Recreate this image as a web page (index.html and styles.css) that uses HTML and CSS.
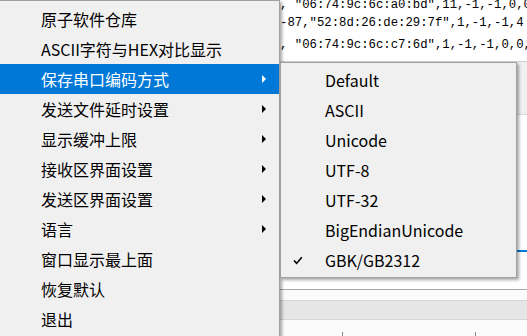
FILE: index.html
```html
<!DOCTYPE html>
<html lang="zh-CN">
<head>
    <meta charset="UTF-8">
    <title>串口菜单</title>
    <link rel="stylesheet" href="styles.css">
</head>
<body>
    <div class="app">
        <!-- 接收区文本 -->
        <div class="editor">
            <div class="code-line l1">, "06:74:9c:6c:a0:bd",11,-1,-1,0,0</div>
            <div class="code-line l2">-87,"52:8d:26:de:29:7f",1,-1,-1,4</div>
            <div class="code-line l3">, "06:74:9c:6c:c7:6d",1,-1,-1,0,0,</div>
        </div>
        <div class="panel">
            <div class="panel-head"></div>
            <div class="panel-body">
                <div class="tab-line"></div>
            </div>
            <div class="status">
                <div class="status-band"></div>
                <div class="status-cells">
                    <span class="cell c1"></span>
                    <span class="cell c2"></span>
                </div>
            </div>
        </div>
    </div>

    <!-- 主菜单 -->
    <ul class="menu main-menu">
        <li class="menu-item">原子软件仓库</li>
        <li class="menu-item">ASCII字符与HEX对比显示</li>
        <li class="menu-item active has-sub">保存串口编码方式</li>
        <li class="menu-item has-sub">发送文件延时设置</li>
        <li class="menu-item has-sub">显示缓冲上限</li>
        <li class="menu-item has-sub">接收区界面设置</li>
        <li class="menu-item has-sub">发送区界面设置</li>
        <li class="menu-item has-sub">语言</li>
        <li class="menu-item">窗口显示最上面</li>
        <li class="menu-item">恢复默认</li>
        <li class="menu-item">退出</li>
    </ul>

    <!-- 子菜单：编码方式 -->
    <ul class="menu sub-menu">
        <li class="menu-item">Default</li>
        <li class="menu-item">ASCII</li>
        <li class="menu-item">Unicode</li>
        <li class="menu-item">UTF-8</li>
        <li class="menu-item">UTF-32</li>
        <li class="menu-item">BigEndianUnicode</li>
        <li class="menu-item checked">
            <svg class="check" width="10" height="9" viewBox="0 0 10 9">
                <polyline points="1,4.5 3.6,7.4 8.8,1.2" fill="none" stroke="#000" stroke-width="1.6"/>
            </svg>
            GBK/GB2312
        </li>
    </ul>
</body>
</html>
```

FILE: styles.css
```css
body {
    margin: 0;
    width: 527px;
    height: 336px;
    overflow: hidden;
    background-color: #ffffff;
    font-family: "Noto Sans CJK SC", sans-serif;
}

.app {
    display: flex;
    flex-direction: column;
    height: 336px;
}

.editor {
    height: 61px;
    padding-left: 280px;
    background-color: #ffffff;
    border-bottom: 1px solid #d0d0d0;
    font-family: "Liberation Mono", monospace;
    font-size: 12.3px;
    color: #000;
    white-space: nowrap;
    overflow: hidden;
}

.code-line {
    height: 18px;
    line-height: 18px;
}

.l1 {
    margin-top: -4px;
}

.l3 {
    margin-top: 4px;
}

.panel {
    flex: 1;
    display: flex;
    flex-direction: column;
    background-color: #f0f0f0;
}

.panel-head {
    height: 52px;
    border-bottom: 1px solid #d9d9d9;
}

.panel-body {
    height: 174px;
    background-color: #ffffff;
    border-bottom: 1px solid #a8a8a8;
}

.tab-line {
    margin-top: 135px;
    height: 2px;
    background-color: #0078d7;
}

.status {
    flex: 1;
    display: flex;
    flex-direction: column;
    background-color: #fbfbfb;
}

.status-band {
    margin-top: 10px;
    height: 18px;
    background-color: #e6e6e6;
    border-top: 1px solid #d6d6d6;
    border-bottom: 1px solid #d6d6d6;
}

.status-cells {
    flex: 1;
    display: flex;
    align-items: flex-end;
}

.cell {
    display: block;
    width: 1px;
    height: 4px;
    background-color: #8a8a8a;
}

.c1 {
    margin-left: 342px;
}

.c2 {
    margin-left: 132px;
}

/* 菜单 */
.menu {
    position: absolute;
    margin: 0;
    padding: 2px 0;
    list-style: none;
    background-color: #f0f0f0;
    border: 1px solid #a0a0a0;
    box-shadow: 2px 2px 3px rgba(0, 0, 0, 0.35);
}

.menu-item {
    position: relative;
    height: 30px;
    line-height: 30px;
    font-size: 16px;
    color: #000;
    white-space: nowrap;
}

.main-menu {
    left: -1px;
    top: 0;
    width: 279px;
    padding-top: 3px;
}

.main-menu .menu-item {
    padding-left: 41px;
}

.main-menu .active {
    background-color: #0078d7;
    color: #ffffff;
}

.has-sub::after {
    content: "";
    position: absolute;
    left: 262px;
    top: 11px;
    border-top: 4px solid transparent;
    border-bottom: 4px solid transparent;
    border-left: 4px solid #000;
}

.active.has-sub::after {
    border-left-color: #ffffff;
}

.sub-menu {
    left: 280px;
    top: 62px;
    width: 235px;
}

.sub-menu .menu-item {
    padding-left: 44px;
}

.check {
    position: absolute;
    left: 12px;
    top: 11px;
}
```
